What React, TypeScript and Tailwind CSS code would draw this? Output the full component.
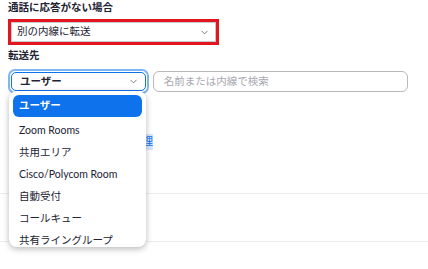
import { ChevronDown } from "lucide-react";

const font = { fontFamily: "Lato, 'Noto Sans CJK JP', sans-serif" };

const menuItems = [
  "ユーザー",
  "Zoom Rooms",
  "共用エリア",
  "Cisco/Polycom Room",
  "自動受付",
  "コールキュー",
  "共有ライングループ",
];

function DestinationMenu() {
  return (
    <div className="absolute left-[9px] top-[91px] w-[137px] h-[156px] overflow-hidden rounded-lg bg-white shadow-[0_2px_6px_rgba(0,0,0,0.28)] px-[4px] pt-[4px]">
      {menuItems.map((item, i) => (
        <div
          key={item}
          className={
            i === 0
              ? "h-[22px] mb-[3px] rounded-md bg-[#0e72ed] px-[6px] flex items-center text-white font-bold text-[10.5px]"
              : "h-[22px] px-[6px] flex items-center text-[#232333] text-[10.5px]"
          }
        >
          {item}
        </div>
      ))}
    </div>
  );
}

export default function App() {
  return (
    <div
      className="relative w-[428px] h-[269px] overflow-hidden bg-white text-[#232333]"
      style={font}
    >
      <div className="pl-[8px] pr-[20px] pt-[1px]">
        {/* no answer */}
        <div className="h-[14px] flex items-center text-[10.5px] font-bold">
          通話に応答がない場合
        </div>
        <div className="mt-[4px] w-[211px] border-[3px] border-[#e3161f]">
          <div className="h-[20px] border border-[#c8c8cc] flex items-center justify-between pl-[5px] pr-[5px]">
            <span className="text-[10.5px]">別の内線に転送</span>
            <ChevronDown className="w-[11px] h-[11px] text-[#6e7680]" strokeWidth={2} />
          </div>
        </div>

        {/* forward to */}
        <div className="mt-[4px] h-[14px] flex items-center text-[10.5px] font-bold">
          転送先
        </div>
        <div className="mt-[6px] flex items-center gap-[4px]">
          <div className="w-[141px] h-[25px] rounded-[7px] border-2 border-[#7fb4f5] p-[1px]">
            <div className="h-full rounded-[5px] border border-[#0e72ed] flex items-center justify-between pl-[8px] pr-[6px]">
              <span className="text-[10.5px] font-bold">ユーザー</span>
              <ChevronDown className="w-[11px] h-[11px] text-[#6e7680]" strokeWidth={2} />
            </div>
          </div>
          <div className="w-[256px] h-[21px] rounded-[6px] border border-[#b8b8bc] flex items-center pl-[10px] text-[10.5px] text-[#a8a8b0]">
            名前または内線で検索
          </div>
        </div>

        {/* content behind the menu */}
        <div className="mt-[41px] h-[14px] flex items-center text-[10.5px] text-[#0e72ed]">
          <span className="pl-[82px]">転送先の管</span>
          <span className="bg-[#d6e6fb]">理</span>
        </div>
      </div>
      <div className="mt-[44px] border-t border-[#ececf0]" />
      <div className="mt-[47px] border-t border-[#ececf0]" />

      <DestinationMenu />
    </div>
  );
}
